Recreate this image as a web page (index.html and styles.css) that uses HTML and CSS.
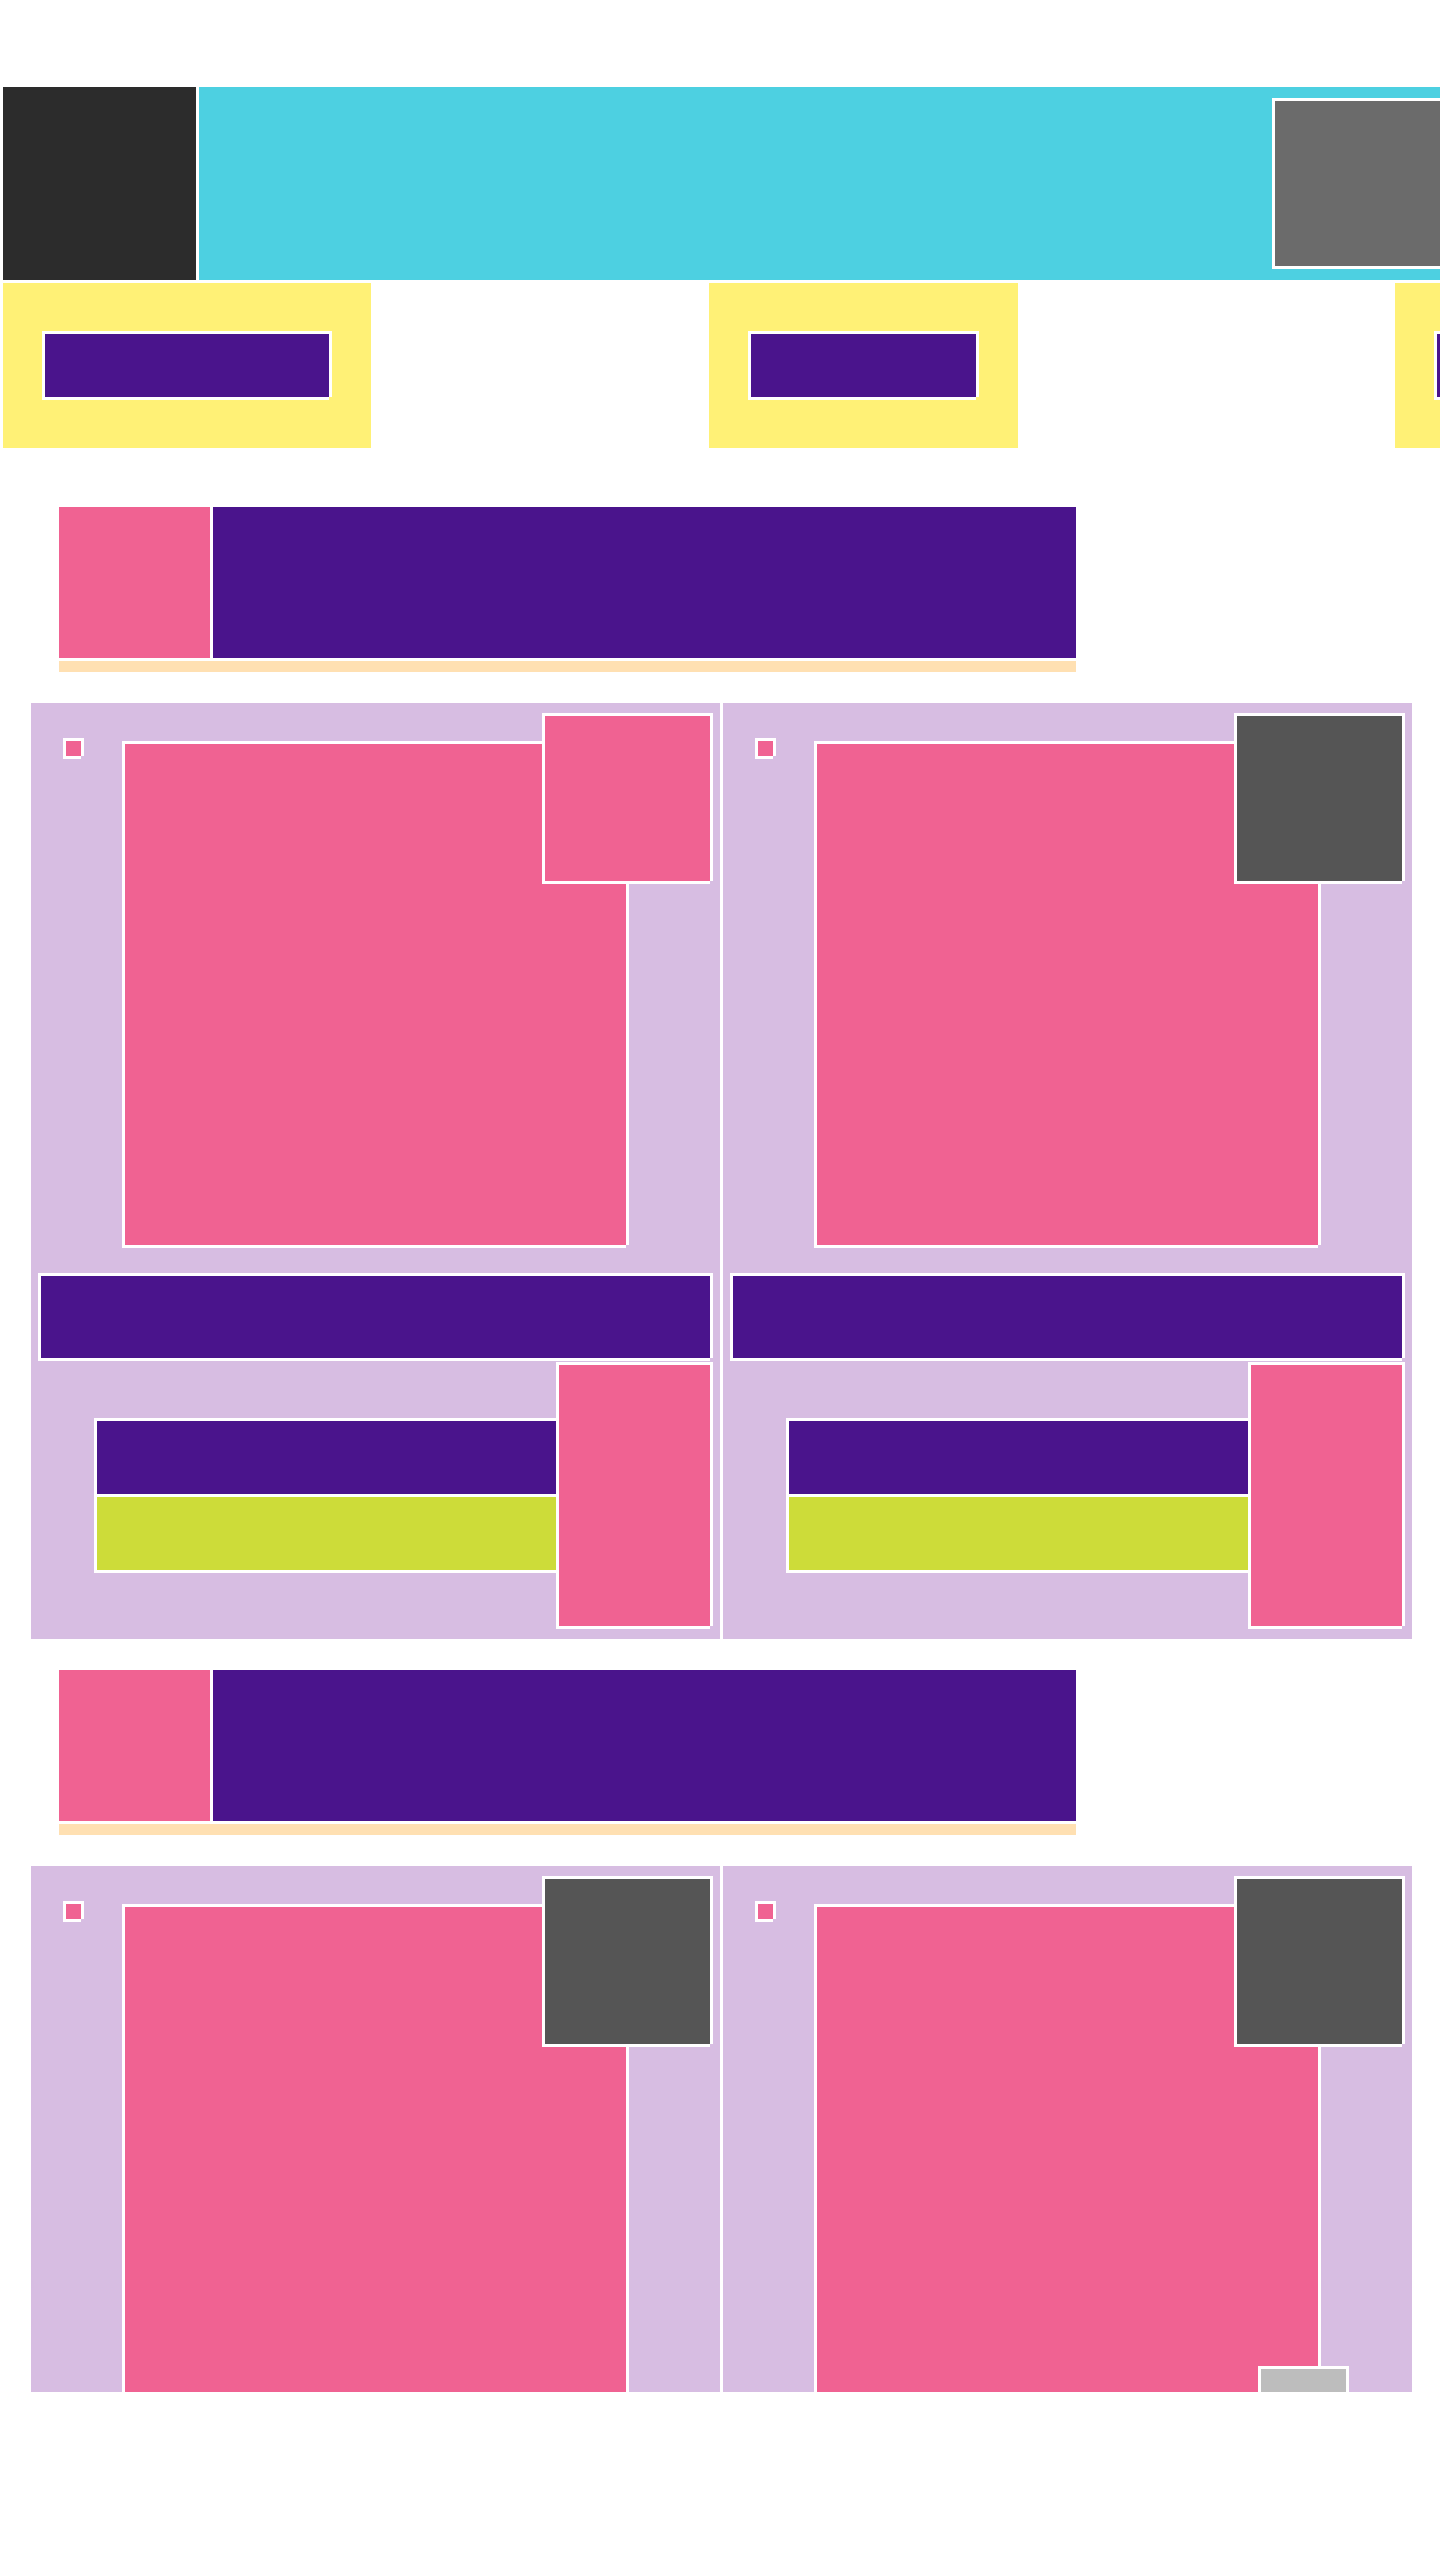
FILE: index.html
```html
<!DOCTYPE html>
<html lang="en">
<head>
<meta charset="utf-8">
<title>Layout</title>
<link rel="stylesheet" href="styles.css">
</head>
<body>
<div class="page">
  <header class="topbar">
    <div class="logo w"></div>
    <div class="banner w">
      <div class="banner-box w"></div>
    </div>
  </header>

  <nav class="tabs">
    <div class="tab tab-1"><div class="tab-label tab-label-1 w"></div></div>
    <div class="tab tab-2"><div class="tab-label tab-label-2 w"></div></div>
    <div class="tab tab-3"><div class="tab-label tab-label-2 w"></div></div>
  </nav>

  <section class="section">
    <div class="section-head">
      <div class="head-icon w"></div>
      <div class="head-title w"></div>
    </div>
    <div class="head-rule"></div>
    <div class="cards">
      <article class="card w">
        <div class="card-top">
          <div class="dot w"></div>
          <div class="hero w"></div>
        </div>
        <div class="corner w corner-pink"></div>
        <div class="bar w"></div>
        <div class="card-bottom">
          <div class="stack">
            <div class="stack-title w"></div>
            <div class="stack-tag w"></div>
          </div>
          <div class="side w"></div>
        </div>
      </article>
      <article class="card w">
        <div class="card-top">
          <div class="dot w"></div>
          <div class="hero w"></div>
        </div>
        <div class="corner w corner-gray"></div>
        <div class="bar w"></div>
        <div class="card-bottom">
          <div class="stack">
            <div class="stack-title w"></div>
            <div class="stack-tag w"></div>
          </div>
          <div class="side w"></div>
        </div>
      </article>
    </div>
  </section>

  <section class="section section-2">
    <div class="section-head">
      <div class="head-icon w"></div>
      <div class="head-title w"></div>
    </div>
    <div class="head-rule"></div>
    <div class="cards">
      <article class="card card-short w">
        <div class="card-top">
          <div class="dot w"></div>
          <div class="hero w"></div>
        </div>
        <div class="corner w corner-gray"></div>
      </article>
      <article class="card card-short w">
        <div class="card-top">
          <div class="dot w"></div>
          <div class="hero w"></div>
        </div>
        <div class="corner w corner-gray"></div>
        <div class="chip w"></div>
      </article>
    </div>
  </section>
</div>
</body>
</html>
```

FILE: styles.css
```css
html, body {
  margin: 0;
  padding: 0;
  background: #ffffff;
  overflow: hidden;
  font-family: "Liberation Sans", Arial, sans-serif;
}

.page {
  width: 1440px;
  box-sizing: border-box;
  padding: 87px 0 0 3px;
  overflow: hidden;
  min-height: 2560px;
}

/* white 3px frame drawn around each block */
.w {
  box-shadow:
    -3px -3px 0 #fff,
    0 -3px 0 #fff,
    3px -3px 0 #fff,
    -3px 0 0 #fff,
    3px 0 0 #fff,
    -3px 3px 0 #fff,
    0 3px 0 #fff;
}

/* top bar */
.topbar {
  display: flex;
  gap: 3px;
  height: 193px;
}
.logo {
  width: 193px;
  height: 193px;
  flex-shrink: 0;
  background: #2c2c2c;
}
.banner {
  flex: 1;
  background: #4dd0e1;
  display: flex;
  justify-content: flex-end;
  align-items: center;
}
.banner-box {
  width: 165px;
  height: 165px;
  background: #6b6b6b;
}

/* tabs */
.tabs {
  display: flex;
  margin-top: 3px;
}
.tab {
  flex-shrink: 0;
  background: #fff176;
  padding: 51px 42px;
}
.tab-2 { margin-left: 338px; }
.tab-3 { margin-left: 377px; }
.tab-label {
  height: 63px;
  background: #4a148c;
}
.tab-label-1 { width: 284px; }
.tab-label-2 { width: 225px; }

/* sections */
.section {
  margin-top: 59px;
}
.section-2 {
  margin-top: 31px;
}
.section-head {
  display: flex;
  gap: 3px;
  margin-left: 56px;
  width: 1017px;
}
.head-icon {
  width: 151px;
  height: 151px;
  flex-shrink: 0;
  background: #f06292;
}
.head-title {
  flex: 1;
  height: 151px;
  background: #4a148c;
}
.head-rule {
  margin: 3px 0 0 56px;
  width: 1017px;
  height: 11px;
  background: #ffe0b2;
}

/* cards */
.cards {
  display: flex;
  gap: 3px;
  margin: 31px 0 0 28px;
}
.card {
  position: relative;
  width: 689px;
  box-sizing: border-box;
  padding: 0 10px 13px;
  background: #d7bde2;
  flex-shrink: 0;
}
.card-short {
  height: 526px;
  padding-bottom: 0;
  overflow: hidden;
}
.card-top {
  display: flex;
  align-items: flex-start;
}
.dot {
  width: 15px;
  height: 15px;
  margin: 38px 0 0 25px;
  background: #f06292;
  flex-shrink: 0;
}
.hero {
  width: 501px;
  height: 501px;
  margin: 41px 0 0 44px;
  background: #f06292;
  flex-shrink: 0;
}
.corner {
  position: absolute;
  top: 13px;
  right: 10px;
  width: 165px;
  height: 165px;
}
.corner-pink { background: #f06292; }
.corner-gray { background: #555555; }

.bar {
  margin-top: 31px;
  height: 82px;
  background: #4a148c;
}
.card-bottom {
  margin-top: 7px;
  display: flex;
  justify-content: flex-end;
  align-items: center;
  gap: 3px;
}
.stack {
  display: flex;
  flex-direction: column;
  gap: 3px;
  width: 459px;
}
.stack-title {
  height: 73px;
  background: #4a148c;
}
.stack-tag {
  height: 73px;
  background: #cddc39;
}
.side {
  width: 151px;
  height: 261px;
  flex-shrink: 0;
  background: #f06292;
}
.chip {
  position: absolute;
  left: 538px;
  top: 503px;
  width: 85px;
  height: 30px;
  background: #bdbdbd;
}
```
